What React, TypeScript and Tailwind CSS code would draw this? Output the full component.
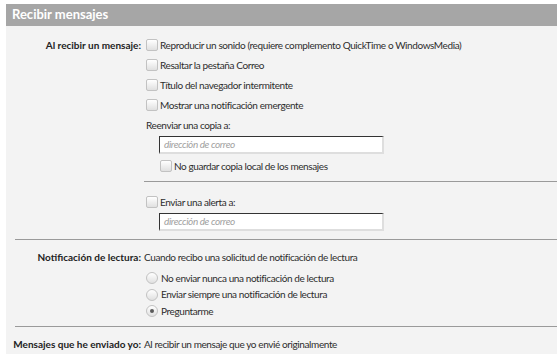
import React from 'react';

const font = { fontFamily: 'Lato, "Noto Sans", sans-serif' };

const Check: React.FC = () => (
  <span className="inline-block w-[12px] h-[12px] shrink-0 rounded-[2px] border border-[#c2c2c2] bg-gradient-to-b from-white to-[#e0e0e0]" />
);

const Radio: React.FC<{ on?: boolean }> = ({ on }) => (
  <span className="relative inline-block w-[12px] h-[12px] shrink-0 rounded-full border border-[#c2c2c2] bg-gradient-to-b from-white to-[#e0e0e0]">
    {on && <span className="absolute left-[3px] top-[3px] w-[4px] h-[4px] rounded-full bg-[#5a5a5a]" />}
  </span>
);

const CheckRow: React.FC<{ text: string; indent?: boolean }> = ({ text, indent }) => (
  <div className={`flex items-center h-[20px] gap-[2px] ${indent ? 'pl-[16px]' : 'pl-[2px]'}`}>
    <Check />
    <span>{text}</span>
  </div>
);

const RadioRow: React.FC<{ text: string; on?: boolean }> = ({ text, on }) => (
  <div className="flex items-center h-[16.5px] gap-[3px] pl-[2px]">
    <Radio on={on} />
    <span>{text}</span>
  </div>
);

const EmailInput: React.FC = () => (
  <div className="ml-[15px] w-[225px] h-[18px] bg-white border-t border-l border-t-[#333] border-l-[#333] border-r-2 border-b-2 border-r-[#dedede] border-b-[#dedede] flex items-center pl-[4px] italic text-[#a0a0a0] text-[10px]">
    dirección de correo
  </div>
);

const Label: React.FC<{ children: React.ReactNode }> = ({ children }) => (
  <div className="w-[135px] shrink-0 h-[20px] flex items-center justify-end whitespace-nowrap font-bold text-[#222] tracking-[0px]">
    {children}
  </div>
);

export default function App() {
  return (
    <div className="w-[557px] h-[354px] bg-white pt-[4px] pl-[6px] overflow-hidden text-[10px] tracking-[-0.4px] text-[#2d2d2d]" style={font}>
      <div className="bg-[#f3f3f3] h-[360px]">
        <div className="h-[22px] bg-[#a6a6a6] text-white font-bold text-[13px] tracking-normal pl-[6px] flex items-center">
          Recibir mensajes
        </div>

        <div className="flex pt-[9px]">
          <Label>Al recibir un mensaje:</Label>
          <div className="flex-1 pl-[3px]">
            <CheckRow text="Reproducir un sonido (requiere complemento QuickTime o WindowsMedia)" />
            <CheckRow text="Resaltar la pestaña Correo" />
            <CheckRow text="Título del navegador intermitente" />
            <CheckRow text="Mostrar una notificación emergente" />
            <div className="h-[20px] flex items-center pl-[2px]">Reenviar una copia a:</div>
            <div className="pt-[1px]">
              <EmailInput />
            </div>
            <div className="pt-[2px]">
              <CheckRow text="No guardar copia local de los mensajes" indent />
            </div>
            <div className="mt-[5px] border-t border-[#9a9a9a]" />
            <div className="pt-[10px]">
              <CheckRow text="Enviar una alerta a:" />
            </div>
            <div className="pt-[1px]">
              <EmailInput />
            </div>
          </div>
        </div>

        <div className="ml-[9px] mt-[8px] border-t border-[#9a9a9a]" />

        <div className="flex pt-[7px]">
          <Label>Notificación de lectura:</Label>
          <div className="flex-1 pl-[3px]">
            <div className="h-[20px] flex items-center">Cuando recibo una solicitud de notificación de lectura</div>
            <div className="pt-[3px]">
              <RadioRow text="No enviar nunca una notificación de lectura" />
              <RadioRow text="Enviar siempre una notificación de lectura" />
              <RadioRow text="Preguntarme" on />
            </div>
          </div>
        </div>

        <div className="ml-[9px] mt-[6px] border-t border-[#9a9a9a]" />

        <div className="flex pt-[8px]">
          <Label>Mensajes que he enviado yo:</Label>
          <div className="flex-1 pl-[3px] h-[20px] flex items-center">Al recibir un mensaje que yo envié originalmente</div>
        </div>
      </div>
    </div>
  );
}
